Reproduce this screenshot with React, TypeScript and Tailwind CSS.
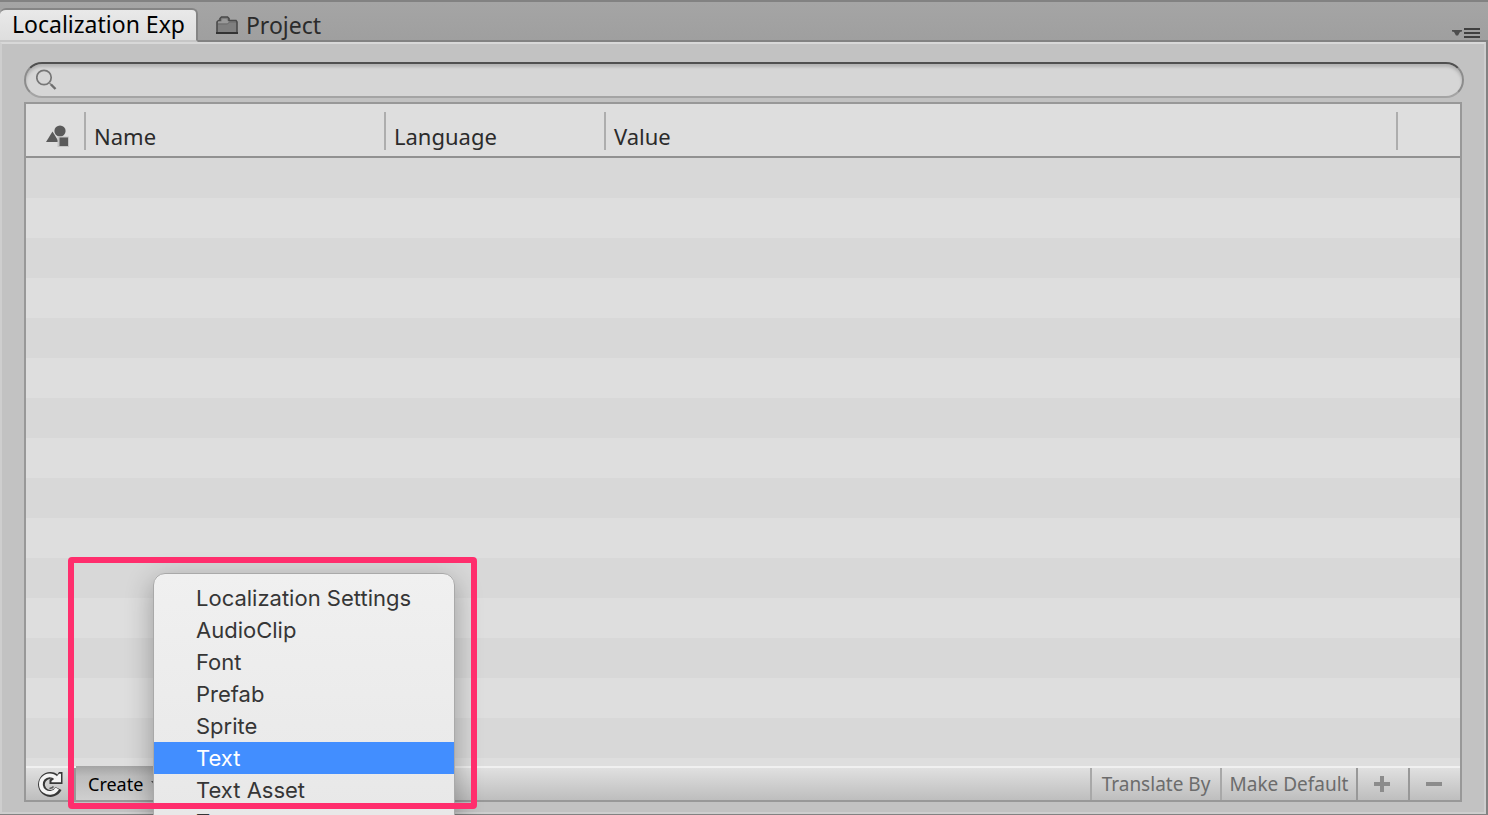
import React from 'react';

const rows = Array.from({ length: 16 }, (_, i) => i);

const menuItems = [
  'Localization Settings',
  'AudioClip',
  'Font',
  'Prefab',
  'Sprite',
  'Text',
  'Text Asset',
  'Texture',
];

function FolderIcon() {
  return (
    <svg width="22" height="20" viewBox="0 0 22 20" aria-hidden="true">
      <path d="M1 18V7l1.500-1.500h1.500V3.500L5.500 2h6L13 3.500V5.500h7L21 7v11z" fill="#7f7f7f" stroke="#4a4a4a" strokeWidth="1.600" />
      <path d="M2 8.500h9.500l2-2H12L10.500 4h-4L5.500 6.500H2z" fill="#999" />
      <path d="M2 9h9.500l2-2H20" fill="none" stroke="#6a6a6a" strokeWidth="1" />
      <path d="M0 18h22" stroke="#333" strokeWidth="2" />
    </svg>
  );
}

function SearchIcon() {
  return (
    <svg width="22" height="22" viewBox="0 0 22 22" aria-hidden="true" fill="none">
      <circle cx="8" cy="8.500" r="7.200" stroke="#767676" strokeWidth="1.700" />
      <path d="M13 13.500l3 3" stroke="#8a8a8a" strokeWidth="1.600" />
      <path d="M15 15.500l4.500 4.500" stroke="#6e6e6e" strokeWidth="2.400" />
    </svg>
  );
}

function ShapesIcon() {
  return (
    <svg width="24" height="22" viewBox="0 0 24 22" aria-hidden="true">
      <path d="M0 17L6.500 6.500 13 17z" fill="#5a5a5a" />
      <circle cx="14" cy="6" r="5.600" fill="#5a5a5a" />
      <path d="M11.500 11.500H23V22H11.500z" fill="#c4c4c4" />
      <path d="M13.500 12.500H22V21h-8.500z" fill="#5a5a5a" />
    </svg>
  );
}

function RefreshIcon() {
  return (
    <svg width="26" height="26" viewBox="0 0 26 26" aria-hidden="true" fill="none">
      <path d="M21.500 17.500A9 9 0 1 1 18.500 6" stroke="#383838" strokeWidth="6.800" />
      <path d="M25.500 1v12H12.500V8.500L16 7l4-3 2-3z" fill="#383838" />
      <path d="M20.300 17.500A8.800 8.800 0 1 1 19 7" stroke="#f4f4f4" strokeWidth="3.800" />
      <path d="M24 2.800v8.400h-9.500V10l4-3 3.500-4.200z" fill="#f4f4f4" />
      <path d="M16.500 15.500a4 4 0 0 1-4 1.700" stroke="#5a5a5a" strokeWidth="1.400" />
    </svg>
  );
}

function PaneMenuIcon() {
  return (
    <svg width="28" height="10" viewBox="0 0 28 10" aria-hidden="true">
      <path d="M0 2h10v1.500L8 4 6 7.500H4L2 4 0 3.500z" fill="#4e4e4e" />
      <path d="M12 0h16v2H12zM12 4h16v2H12zM12 8h16v2H12z" fill="#404040" />
    </svg>
  );
}

function HeaderCell({ label, width, children }: { label: string; width: string; children?: React.ReactNode }) {
  return (
    <th scope="col" className={`${width} border-b-2 border-[#919191] p-0 text-left font-normal`}>
      <div className="flex h-[52px] items-end pb-1.5">
        <div className="flex h-[38px] min-w-0 grow items-center border-r-2 border-[#adadad] pl-2">
          {children ?? <span className="mt-2.5">{label}</span>}
        </div>
      </div>
    </th>
  );
}

export default function App() {
  return (
    <div className="flex h-screen flex-col overflow-hidden border-t-2 border-[#828282] bg-[#a2a2a2] font-['Noto_Sans','Open_Sans',sans-serif] text-[22px] text-[#2b2b2b]">
      <header className="flex h-10 shrink-0 items-end justify-between border-b-2 border-[#828282] bg-linear-to-b from-[#a5a5a5] to-[#9f9f9f] text-[23px]">
        <div role="tablist" className="flex items-end">
          <button
            role="tab"
            aria-selected="true"
            className="-mb-0.5 flex h-[34px] items-center rounded-t-md border-t-2 border-r-2 border-b-2 border-[#858585] border-b-[#c6c6c6] bg-linear-to-b from-[#e9e9e9] to-[#dedede] pr-[11px] pb-0.5 pl-3 leading-7 text-black"
          >
            Localization Exp
          </button>
          <button role="tab" aria-selected="false" className="flex h-8 items-center gap-2 pt-0.5 pl-[18px] leading-7">
            <FolderIcon />
            Project
          </button>
        </div>
        <button aria-label="Pane options" className="mr-2 flex h-3.5 items-center">
          <PaneMenuIcon />
        </button>
      </header>

      <main className="flex min-h-0 grow border-r-2 border-b border-[#828282]">
        <div className="flex min-w-0 grow flex-col border-2 border-[#cecece] border-t-[#d8d8d8] bg-[#c2c2c2] px-[22px] pt-[18px] pb-2.5">
          <label className="-mr-0.5 flex h-9 shrink-0 items-center gap-2 rounded-full border-2 border-[#a4a4a4] border-x-[#8c8c8c] border-t-[#505050] bg-[#d6d6d6] px-2.5 shadow-[inset_0_3px_3px_#b4b4b4]">
            <SearchIcon />
            <input type="search" aria-label="Search" className="min-w-0 grow bg-transparent outline-none" />
          </label>

          <section className="mt-1 flex min-h-0 grow flex-col border-2 border-[#989898] bg-[#dedede]">
            <div className="min-h-0 grow overflow-hidden">
              <table className="w-full table-fixed border-separate border-spacing-0">
                <thead className="bg-[#dedede]">
                  <tr>
                    <HeaderCell label="Type" width="w-[60px]">
                      <span className="ml-3 pt-2.5" role="img" aria-label="Type">
                        <ShapesIcon />
                      </span>
                    </HeaderCell>
                    <HeaderCell label="Name" width="w-[300px]" />
                    <HeaderCell label="Language" width="w-[220px]" />
                    <HeaderCell label="Value" width="w-auto" />
                    <td className="w-[62px] border-b-2 border-[#919191]" />
                  </tr>
                </thead>
                <tbody>
                  {rows.map((row) => (
                    <tr key={row} className="h-10 odd:bg-[#d8d8d8] even:bg-[#dedede]">
                      <td colSpan={5} />
                    </tr>
                  ))}
                </tbody>
              </table>
            </div>

            <footer className="flex h-[34px] shrink-0 border-t-2 border-[#f0f0f0] bg-linear-to-b from-[#e0e0e0] to-[#bebebe] text-[19px]">
              <button aria-label="Refresh" className="flex w-[50px] items-center justify-center border-r-2 border-[#989898]">
                <RefreshIcon />
              </button>
              <div className="relative flex">
                <button
                  aria-haspopup="menu"
                  aria-expanded="true"
                  className="-mt-0.5 flex w-[110px] items-center gap-2 bg-linear-to-b from-[#a4a4a4] via-[#bdbdbd] via-30% to-[#cfcfcf] pt-0.5 pl-3 text-lg text-black"
                >
                  Create
                  <svg width="10" height="6" viewBox="0 0 10 6" aria-hidden="true">
                    <path d="M0 0h10L5 6z" fill="#555" />
                  </svg>
                </button>
                <ul
                  role="menu"
                  className="absolute -top-[195px] left-[77px] z-10 w-[302px] rounded-xl border border-[#a9a9a9] bg-linear-to-b from-[#f0f0f0] to-[#e7e7e7] py-2 font-['Inter',sans-serif] text-[22px] text-[#363636] shadow-[0_8px_28px_#00000050]"
                >
                  {menuItems.map((item) => (
                    <li key={item} role="none">
                      <button
                        role="menuitem"
                        className={
                          item === 'Text'
                            ? 'block h-8 w-full bg-[#428eff] pl-[42px] text-left leading-8 text-white'
                            : 'block h-8 w-full pl-[42px] text-left leading-8'
                        }
                      >
                        {item}
                      </button>
                    </li>
                  ))}
                </ul>
                <div className="pointer-events-none absolute -top-[211px] -left-2 z-20 h-[252px] w-[409px] rounded-sm border-6 border-[#ff2e6d]" />
              </div>
              <div className="ml-auto flex text-[#6c6c6c]">
                <button disabled className="w-[130px] border-l-2 border-[#a8a8a8]">Translate By</button>
                <button disabled className="w-[136px] border-l-2 border-[#a8a8a8]">Make Default</button>
                <button disabled aria-label="Add" className="flex w-[52px] items-center justify-center border-l-2 border-[#989898] pr-0.5">
                  <svg width="16" height="16" viewBox="0 0 16 16" aria-hidden="true">
                    <path d="M6 0h4v6h6v4h-6v6H6v-6H0V6h6z" fill="#8c8c8c" />
                  </svg>
                </button>
                <button disabled aria-label="Remove" className="flex w-[52px] items-center justify-center border-l-2 border-[#989898] pr-0.5">
                  <svg width="16" height="4" viewBox="0 0 16 4" aria-hidden="true">
                    <path d="M0 0h16v4H0z" fill="#8c8c8c" />
                  </svg>
                </button>
              </div>
            </footer>
          </section>
        </div>
      </main>
    </div>
  );
}
